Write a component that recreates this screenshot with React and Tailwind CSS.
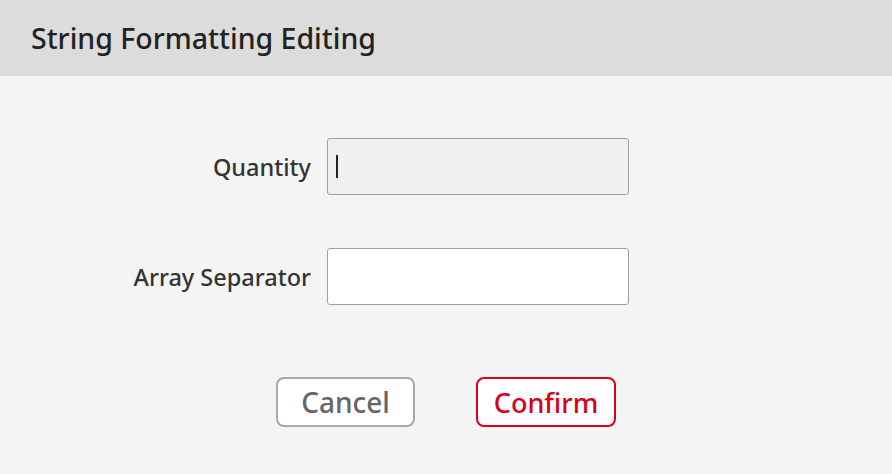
export default function App() {
  return (
    <div
      className="w-[892px] h-[474px] bg-[#f4f4f4] flex flex-col"
      style={{ fontFamily: '"Noto Sans", "Open Sans", sans-serif' }}
    >
      {/* Header */}
      <div className="h-[76px] bg-[#dcdcdc] flex items-center pl-[31px]">
        <h1 className="text-[28.5px] font-medium text-[#222]">
          String Formatting Editing
        </h1>
      </div>

      {/* Form */}
      <div className="flex flex-col pt-[62px]">
        <div className="flex items-center">
          <label className="w-[311px] text-right text-[23.5px] font-medium text-[#333] pt-[3px]">
            Quantity
          </label>
          <div className="ml-[16px] w-[302px] h-[57px] bg-[#f0f0f0] border border-[#a0a0a0] rounded-[3px] flex items-center pl-[8px]">
            <div className="w-[2px] h-[23px] bg-[#222]" />
          </div>
        </div>

        <div className="flex items-center mt-[53px]">
          <label className="w-[311px] text-right text-[23.5px] font-medium text-[#333] pt-[3px]">
            Array Separator
          </label>
          <input
            type="text"
            className="ml-[16px] w-[302px] h-[57px] bg-white border border-[#a0a0a0] rounded-[3px] outline-none"
          />
        </div>

        <div className="flex justify-center gap-[61px] mt-[72px]">
          <button className="w-[139px] h-[50px] bg-white border-2 border-[#a8a8a8] rounded-[8px] text-[28px] font-medium text-[#666] leading-none flex items-center justify-center">
            Cancel
          </button>
          <button className="w-[140px] h-[50px] bg-white border-2 border-[#d9001b] rounded-[8px] text-[27px] font-medium text-[#d9001b] leading-none flex items-center justify-center">
            Confirm
          </button>
        </div>
      </div>
    </div>
  );
}
